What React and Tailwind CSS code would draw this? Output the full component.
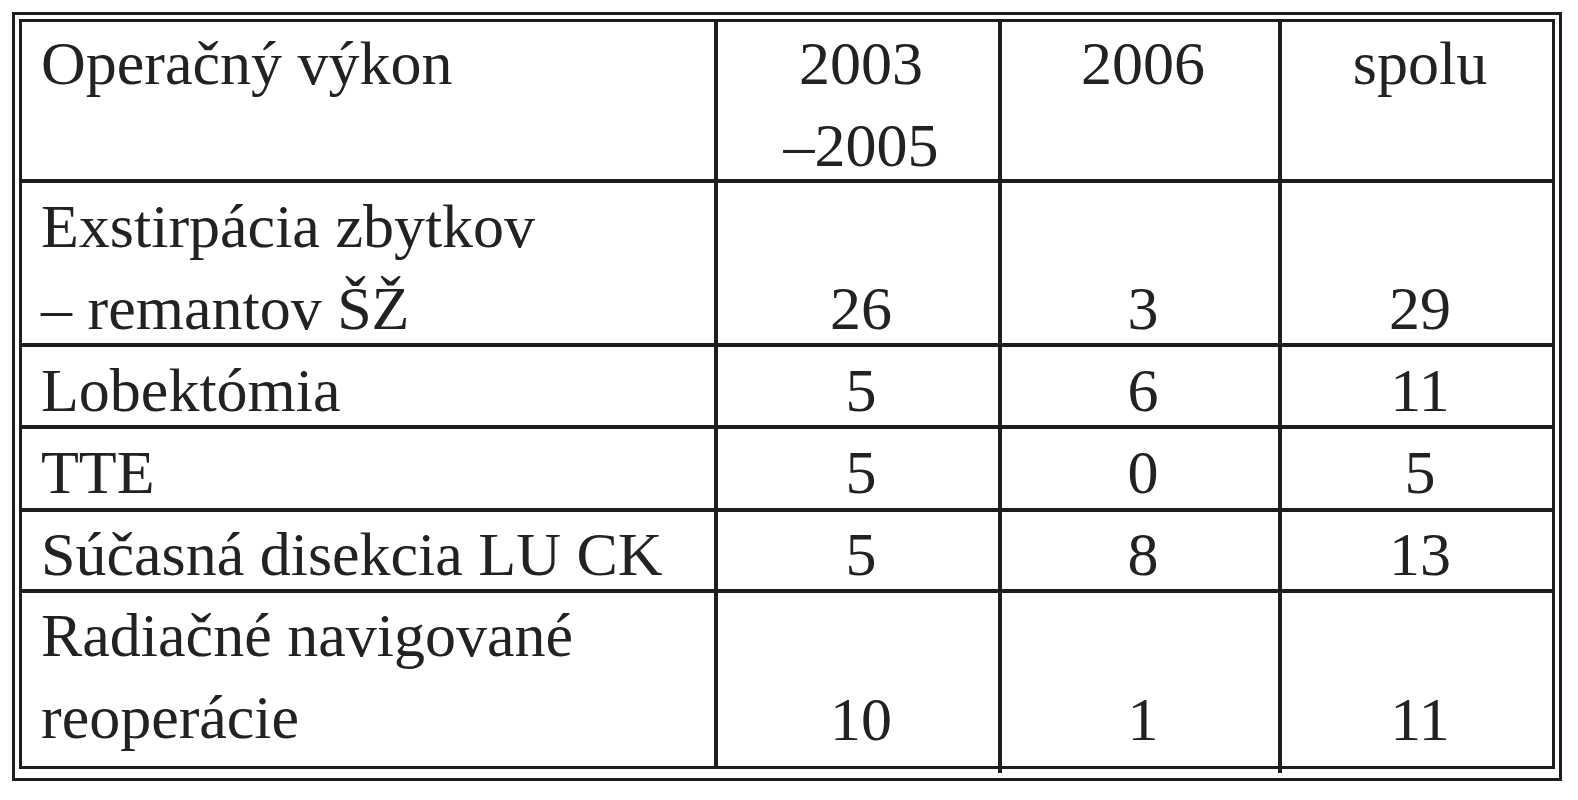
import React from "react";

// Operačné výkony – tabuľka s dvojitým rámom

const rows = [
    { label: ["Operačný výkon"], values: [["2003", "–2005"], ["2006"], ["spolu"]], pt: "pt-0", vt: "pt-0" },
    { label: ["Exstirpácia zbytkov", "– remantov ŠŽ"], values: [["26"], ["3"], ["29"]], pt: "pt-[2px]", vt: "pt-[84px]" },
    { label: ["Lobektómia"], values: [["5"], ["6"], ["11"]], pt: "pt-[2px]", vt: "pt-[2px]" },
    { label: ["TTE"], values: [["5"], ["0"], ["5"]], pt: "pt-[2px]", vt: "pt-[2px]" },
    { label: ["Súčasná disekcia LU CK"], values: [["5"], ["8"], ["13"]], pt: "pt-px", vt: "pt-px" },
    { label: ["Radiačné navigované", "reoperácie"], values: [["10"], ["1"], ["11"]], pt: "pt-px", vt: "pt-[85px]" },
];

const Cell = ({ lines, className }) => (
    <div className={`bg-white overflow-visible ${className}`}>
        {lines.map((line, i) => (
            <div key={i} className="whitespace-nowrap">{line}</div>
        ))}
    </div>
);

const App = () => {
    return (
        <div className="min-h-screen bg-white pt-[12px] pl-[12px]">
            <div className="w-[1550px] border-[3px] border-[#1e1e1e] pt-[4px] px-[4px] pb-[5px]">
                {/* Table body */}
                <div
                    className="grid grid-cols-[692px_280px_276px_270px] grid-rows-[157px_160px_78px_79px_77px_173px] gap-[4px] p-[3px] bg-[#1e1e1e] font-['Liberation_Serif',serif] text-[62px] leading-[82px] text-[#222]"
                >
                    {rows.map((row, r) => (
                        <React.Fragment key={r}>
                            <Cell lines={row.label} className={`pl-[19px] ${row.pt}`} />
                            {row.values.map((v, c) => (
                                <Cell key={c} lines={v} className={`text-center pl-[6px] ${row.vt}`} />
                            ))}
                        </React.Fragment>
                    ))}
                </div>

                {/* Column line overshoot below the inner frame */}
                <div className="grid grid-cols-[3px_692px_4px_280px_4px_276px_4px_270px_3px] h-[4px]">
                    <div />
                    <div />
                    <div />
                    <div />
                    <div className="bg-[#1e1e1e]" />
                    <div />
                    <div className="bg-[#1e1e1e]" />
                    <div />
                    <div />
                </div>
            </div>
        </div>
    );
};

export default App;
